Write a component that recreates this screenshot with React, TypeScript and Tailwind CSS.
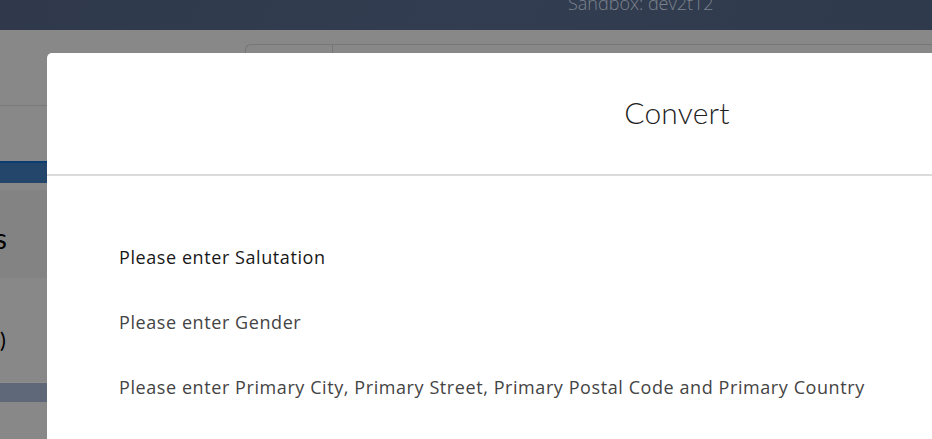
export default function App() {
  const messages = [
    { text: 'Please enter Salutation', tone: 'text-[#181818]' },
    { text: 'Please enter Gender', tone: 'text-[#444444]' },
    { text: 'Please enter Primary City, Primary Street, Primary Postal Code and Primary Country', tone: 'text-[#444444]' },
  ]

  return (
    <div className="relative w-[932px] h-[439px] overflow-hidden bg-[#888888] font-['Open_Sans',sans-serif]">
      {/* global header, dimmed by the backdrop */}
      <div className="h-[30px] bg-[linear-gradient(110deg,#2f394b,#323d51_50%,#2f3a4d)] flex items-end overflow-hidden">
        <div className="ml-[568px] mb-[18px] text-[18px] font-light leading-none text-[#7d838c]">Sandbox: dev2t12</div>
      </div>

      {/* page behind the modal */}
      <div className="h-[75px] relative">
        <div className="absolute left-[245px] top-[14px] w-[88px] h-[30px] border-t border-l border-[#777777] rounded-tl-[6px]" />
        <div className="absolute left-[332px] top-[14px] right-0 h-[30px] border-t border-l border-[#777777]" />
      </div>
      <div className="h-px bg-[#7a7a7a]" />
      <div className="h-[55px]" />
      <div className="h-[2px] bg-[#0c3d70]" />
      <div className="h-[20px] bg-[#24466b]" />
      <div className="h-[7px]" />
      <div className="h-[88px] bg-[#838383] flex items-center">
        <div className="w-[7px] flex justify-end overflow-hidden text-[28px] leading-none text-black mt-[8px] font-['Lato',sans-serif]">Contacts</div>
      </div>
      <div className="h-[104px] flex items-center">
        <div className="w-[6px] flex justify-end overflow-hidden text-[22px] leading-none text-black mt-[20px] font-['Lato',sans-serif]">(0)</div>
      </div>
      <div className="h-px bg-[#8e8e8e]" />
      <div className="h-[19px] bg-[#5f6878]" />

      {/* modal */}
      <div className="absolute left-[47px] top-[53px] w-[1260px] h-[420px] bg-white rounded-t-[5px]">
        <div className="h-[123px] border-b-2 border-[#dddbda] flex items-center justify-center">
          <h2 className="text-[30px] font-light text-[#1f1f1f] tracking-[0.2px] mt-[-2px] font-['Lato',sans-serif]">Convert</h2>
        </div>
        <div className="pl-[72px] pt-[49px]">
          {messages.map((m, i) => (
            <div key={i} className={`h-[65px] flex items-center text-[18px] tracking-[0.58px] ${m.tone}`}>
              {m.text}
            </div>
          ))}
        </div>
      </div>
    </div>
  )
}
